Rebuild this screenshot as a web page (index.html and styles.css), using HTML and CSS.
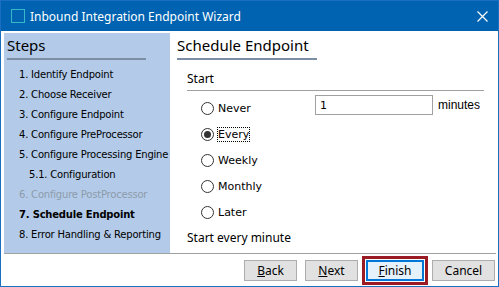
FILE: index.html
```html
<!DOCTYPE html>
<html lang="en">
<head>
  <meta charset="UTF-8" />
  <title>Inbound Integration Endpoint Wizard</title>
  <link rel="stylesheet" href="styles.css">
</head>
<body>
  <div class="window">
    <div class="titlebar">
      <span class="app-icon"></span>
      <span class="title">Inbound Integration Endpoint Wizard</span>
      <svg class="close" width="11" height="11" viewBox="0 0 11 11">
        <path d="M0.5 0.5 L10.5 10.5 M10.5 0.5 L0.5 10.5" stroke="#fff" stroke-width="1.2" fill="none" />
      </svg>
    </div>

    <div class="main">
      <div class="steps">
        <div class="steps-head">Steps</div>
        <ul class="step-list">
          <li>1. Identify Endpoint</li>
          <li>2. Choose Receiver</li>
          <li>3. Configure Endpoint</li>
          <li>4. Configure PreProcessor</li>
          <li>5. Configure Processing Engine</li>
          <li class="sub">5.1. Configuration</li>
          <li class="disabled">6. Configure PostProcessor</li>
          <li class="current">7. Schedule Endpoint</li>
          <li>8. Error Handling &amp; Reporting</li>
        </ul>
      </div>

      <div class="content">
        <div class="content-head">Schedule Endpoint</div>
        <div class="group-label">Start</div>
        <div class="schedule">
          <div class="options">
            <label class="radio"><span class="dot"></span>Never</label>
            <label class="radio checked"><span class="dot"></span><span class="focus">Every</span></label>
            <label class="radio"><span class="dot"></span>Weekly</label>
            <label class="radio"><span class="dot"></span>Monthly</label>
            <label class="radio"><span class="dot"></span>Later</label>
          </div>
          <div class="interval">
            <input type="text" value="1" />
            <span>minutes</span>
          </div>
        </div>
        <div class="summary">Start every minute</div>
      </div>
    </div>

    <div class="footer">
      <button><u>B</u>ack</button>
      <button class="next"><u>N</u>ext</button>
      <span class="default-ring"><button class="finish"><u>F</u>inish</button></span>
      <button class="cancel">Cancel</button>
    </div>
  </div>
</body>
</html>
```

FILE: styles.css
```css
body {
  margin: 0;
  background: #fff;
  font-family: "Noto Sans", sans-serif;
  font-size: 12px;
  color: #000;
}
.window {
  width: 499px;
  height: 287px;
  box-sizing: border-box;
  border: 1px solid #1a6fc0;
  display: flex;
  flex-direction: column;
}
.titlebar {
  height: 30px;
  background: #0063b1;
  color: #fff;
  display: flex;
  align-items: center;
  flex-shrink: 0;
}
.app-icon {
  width: 12px;
  height: 12px;
  border: 1px solid #35b8c8;
  margin: 0 5px 0 10px;
}
.title {
  flex: 1;
  font-size: 12px;
}
.close {
  margin-right: 10px;
}
.main {
  display: flex;
  height: 220px;
  padding: 2px 2px 0 3px;
}
.steps {
  width: 166px;
  background: #b3cbe9;
  flex-shrink: 0;
}
.steps-head {
  margin: 0 24px 0 3px;
  padding: 2px 0 3px;
  font-size: 15px;
  border-bottom: 2px solid #7b8ea4;
  line-height: 20px;
}
.step-list {
  list-style: none;
  margin: 5px 0 0;
  padding: 0 0 0 15px;
  font-family: "DejaVu Sans", sans-serif;
  font-size: 10px;
  letter-spacing: -0.2px;
}
.step-list li {
  height: 20px;
  line-height: 20px;
  white-space: nowrap;
}
.step-list .sub {
  padding-left: 10px;
}
.step-list .disabled {
  color: #8d9bab;
}
.step-list .current {
  font-weight: bold;
}
.content {
  flex: 1;
  padding-left: 7px;
}
.content-head {
  width: 140px;
  padding: 2px 0 3px;
  font-size: 15px;
  line-height: 20px;
  border-bottom: 2px solid #7b8ea4;
}
.group-label {
  margin: 10px 12px 0 10px;
  padding-bottom: 3px;
  border-bottom: 1px solid #a0a0a0;
  line-height: 17px;
}
.schedule {
  display: flex;
  padding: 4px 0 0 24px;
}
.options {
  width: 114px;
  display: flex;
  flex-direction: column;
}
.radio {
  height: 26px;
  display: flex;
  align-items: center;
  font-family: "DejaVu Sans", sans-serif;
  font-size: 11px;
}
.dot {
  width: 11px;
  height: 11px;
  border: 1px solid #333;
  border-radius: 50%;
  margin-right: 4px;
  background: #fff;
  position: relative;
}
.checked .dot::after {
  content: "";
  position: absolute;
  left: 2px;
  top: 2px;
  width: 7px;
  height: 7px;
  border-radius: 50%;
  background: #333;
}
.focus {
  outline: 1px dotted #000;
}
.interval {
  display: flex;
  align-items: center;
  height: 20px;
  margin-top: 0;
}
.interval input {
  width: 118px;
  height: 20px;
  box-sizing: border-box;
  border: 1px solid #a0a0a0;
  padding: 0 4px;
  font-family: "DejaVu Sans", sans-serif;
  font-size: 11px;
  margin-right: 5px;
}
.interval span {
  font-family: "Liberation Sans", sans-serif;
  font-size: 12px;
}
.summary {
  margin: 3px 0 0 10px;
  line-height: 20px;
}
.footer {
  flex: 1;
  border-top: 1px solid #a0a0a0;
  margin: 0 2px 0 3px;
  display: flex;
  justify-content: flex-end;
  align-items: center;
  gap: 8px;
  padding-right: 1px;
}
button {
  height: 21px;
  min-width: 53px;
  background: #e1e1e1;
  border: 1px solid #adadad;
  font-family: "Noto Sans", sans-serif;
  font-size: 12px;
  padding: 0 8px;
}
.cancel {
  min-width: 63px;
}
.default-ring {
  border: 3px solid #9b1b25;
  padding: 1px;
  display: flex;
  margin: 0 -4px;
}
.finish {
  min-width: 58px;
  background: #e5f1fb;
  border: 2px solid #0078d7;
}
```
